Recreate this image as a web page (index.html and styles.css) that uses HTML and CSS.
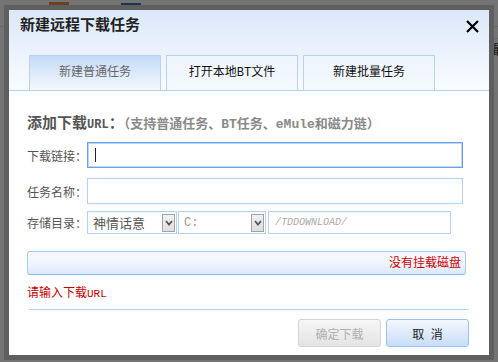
FILE: index.html
```html
<!DOCTYPE html>
<html lang="zh-CN">
<head>
    <meta charset="UTF-8">
    <meta name="viewport" content="width=device-width, initial-scale=1.0">
    <title>新建远程下载任务</title>
    <link rel="stylesheet" href="styles.css">
</head>
<body>
    <!-- page behind the dialog -->
    <div class="page">
        <div class="toolbar">
            <span class="tb-item">新建</span>
            <span class="tb-icon tb-orange"></span>
            <span class="tb-item">删除</span>
            <span class="tb-icon tb-square"></span>
            <span class="tb-item">高级设置</span>
            <span class="tb-icon tb-blue"></span>
            <span class="tb-item">高速通道</span>
        </div>
        <div class="page-side">最</div>
    </div>

    <div class="mask"></div>

    <div class="dialog-frame">
        <div class="dialog">
            <div class="dlg-head">
                <div class="dlg-title">
                    <span>新建远程下载任务</span>
                    <a class="close" href="#">
                        <svg width="13" height="13" viewBox="0 0 13 13">
                            <path d="M1 1 L12 12 M12 1 L1 12" stroke="#000" stroke-width="2.2" fill="none"/>
                        </svg>
                    </a>
                </div>
                <div class="tabs">
                    <div class="tab active">新建普通任务</div>
                    <div class="tab">打开本地<span class="en">BT</span>文件</div>
                    <div class="tab">新建批量任务</div>
                </div>
            </div>

            <div class="dlg-body">
                <div class="section-title">添加下载<span class="en">URL</span>：<span class="hint">（支持普通任务、<span class="en">BT</span>任务、<span class="en">eMule</span>和磁力链）</span></div>

                <div class="row">
                    <label>下载链接：</label>
                    <div class="field focus"><span class="caret"></span></div>
                </div>
                <div class="row row-name">
                    <label>任务名称：</label>
                    <div class="field"></div>
                </div>
                <div class="row row-dir">
                    <label>存储目录：</label>
                    <div class="select s1">
                        <span class="sel-text">神情话意</span>
                        <i class="sel-btn"><svg width="8" height="6" viewBox="0 0 8 6"><path d="M1 1 L4 4.5 L7 1" stroke="#555" stroke-width="1.8" fill="none"/></svg></i>
                    </div>
                    <div class="select s2">
                        <span class="sel-text en">C:</span>
                        <i class="sel-btn"><svg width="8" height="6" viewBox="0 0 8 6"><path d="M1 1 L4 4.5 L7 1" stroke="#555" stroke-width="1.8" fill="none"/></svg></i>
                    </div>
                    <div class="field path">/TDDOWNLOAD/</div>
                </div>

                <div class="disk-bar">没有挂载磁盘</div>

                <div class="error">请输入下载<span class="en">URL</span></div>
            </div>

            <div class="dlg-foot">
                <button class="btn btn-ok" disabled>确定下载</button>
                <button class="btn btn-cancel">取&nbsp;&nbsp;消</button>
            </div>
        </div>
    </div>
</body>
</html>
```

FILE: styles.css
```css
body {
    margin: 0;
    width: 498px;
    height: 362px;
    position: relative;
    overflow: hidden;
    background-color: #f2f2f2;
    font-family: "Liberation Sans", "Noto Sans CJK SC", sans-serif;
    font-size: 12px;
    color: #333;
}
.page {
    height: 100%;
}
.toolbar {
    height: 26px;
    border-bottom: 1px solid #d8d8d8;
    display: flex;
    align-items: center;
    padding-left: 5px;
    font-size: 13px;
    color: #333;
}
.tb-item {
    margin-right: 18px;
}
.tb-icon {
    display: inline-block;
    width: 18px;
    height: 18px;
    margin-right: 8px;
}
.tb-orange {
    border-top: 6px solid #e08a3c;
    height: 0;
    width: 20px;
    margin-top: -16px;
}
.tb-square {
    border: 2px solid #3b6db5;
    width: 16px;
    height: 16px;
}
.tb-blue {
    background-color: #2d5fa8;
    width: 12px;
    height: 12px;
}
.page-side {
    position: absolute;
    right: -6px;
    top: 38px;
    font-size: 13px;
    color: #333;
    border-top: 1px solid #d8d8d8;
    width: 12px;
}
.mask {
    position: absolute;
    left: 0;
    top: 0;
    right: 0;
    bottom: 0;
    background-color: rgba(0, 0, 0, 0.52);
}

.dialog-frame {
    position: absolute;
    left: 4px;
    top: 5px;
    padding: 5px;
    background-color: #5f5f5f;
}
.dialog {
    width: 480px;
    height: 345px;
    background-color: #fff;
}

/* head */
.dlg-head {
    height: 80px;
    border-bottom: 1px solid #b3d3f6;
    background: linear-gradient(#dbe8fa, #fafcff);
}
.dlg-title {
    height: 30px;
    line-height: 30px;
    padding: 0 10px 0 11px;
    display: flex;
    justify-content: space-between;
    align-items: center;
    font-size: 15px;
    font-weight: bold;
    color: #222;
}
.close {
    display: flex;
    width: 13px;
    height: 13px;
    margin-top: 3px;
}
.tabs {
    display: flex;
    margin-top: 15px;
    padding-left: 20px;
}
.tab {
    box-sizing: border-box;
    width: 132px;
    height: 35px;
    line-height: 33px;
    margin-right: 5px;
    border: 1px solid #b3d3f6;
    border-bottom: none;
    text-align: center;
    background: linear-gradient(#eef5fe, #f5f9ff);
    color: #111;
}
.tab.active {
    background: linear-gradient(#c4dbf8, #f4f8fe);
    color: #666;
}

/* body */
.dlg-body {
    padding: 22px 17px 0 18px;
}
.en {
    font-family: "Liberation Mono", monospace;
}
.section-title {
    height: 20px;
    line-height: 20px;
    font-size: 15px;
    font-weight: bold;
    color: #555;
    white-space: nowrap;
}
.section-title .en {
    font-size: 12px;
}
.hint {
    font-size: 13px;
    color: #8a8a8a;
}
.hint .en {
    font-size: 13px;
}
.row {
    display: flex;
    align-items: center;
    margin-top: 9px;
}
.row label {
    width: 60px;
    color: #555;
    white-space: nowrap;
}
.field {
    box-sizing: border-box;
    width: 376px;
    height: 26px;
    border: 1px solid #b3d3f6;
    background-color: #fff;
    display: flex;
    align-items: center;
}
.field.focus {
    border-color: #6b9fe8;
    box-shadow: inset 0 0 0 1px #bcd6f7;
}
.caret {
    width: 1px;
    height: 14px;
    margin-left: 7px;
    background-color: #222;
}
.row-name {
    margin-top: 10px;
}
.row-dir {
    margin-top: 7px;
}
.row-dir .field,
.select {
    height: 23px;
}
.select {
    box-sizing: border-box;
    border: 1px solid #b3d3f6;
    display: flex;
    align-items: center;
    padding: 0 1px 0 5px;
    font-size: 13px;
    color: #555;
}
.select.s1 {
    width: 90px;
    margin-right: 1px;
}
.select.s2 {
    width: 88px;
    margin-right: 2px;
}
.select.s2 .sel-text {
    font-size: 12px;
    color: #999;
}
.sel-btn {
    margin-left: auto;
    box-sizing: border-box;
    width: 13px;
    height: 18px;
    border: 1px solid #a3a3a3;
    background: linear-gradient(#f0f0f0, #dedede);
    display: flex;
    align-items: center;
    justify-content: center;
}
.field.path {
    width: 183px;
    padding-left: 6px;
    font-family: "Liberation Mono", monospace;
    font-style: italic;
    font-size: 10px;
    color: #aaa;
}
.disk-bar {
    box-sizing: border-box;
    width: 439px;
    height: 24px;
    margin-top: 17px;
    border: 1px solid #a9cbf2;
    border-bottom-color: #8fb8ec;
    border-radius: 3px;
    background: linear-gradient(#f6f9ff, #f0f6fe 50%, #d9e8fb);
    text-align: right;
    line-height: 22px;
    padding-right: 4px;
    font-size: 12px;
    color: #d00000;
}
.error {
    margin-top: 10px;
    line-height: 16px;
    color: #c80000;
}
.error .en {
    font-size: 11px;
}

/* foot */
.dlg-foot {
    margin: 7px 20px 0 20px;
    border-top: 1px solid #b3d3f6;
    padding-top: 9px;
    display: flex;
    justify-content: flex-end;
}
.btn {
    width: 83px;
    height: 28px;
    margin-left: 5px;
    border-radius: 3px;
    font-family: "Liberation Sans", "Noto Sans CJK SC", sans-serif;
    font-size: 12px;
    cursor: pointer;
}
.btn-ok {
    border: 1px solid #d3d3d3;
    background: linear-gradient(#f6f6f6, #e4e4e4);
    color: #b0b0b0;
}
.btn-cancel {
    border: 1px solid #9ec2ef;
    background: linear-gradient(#f3f8ff, #c9ddf8);
    color: #222;
}
```
